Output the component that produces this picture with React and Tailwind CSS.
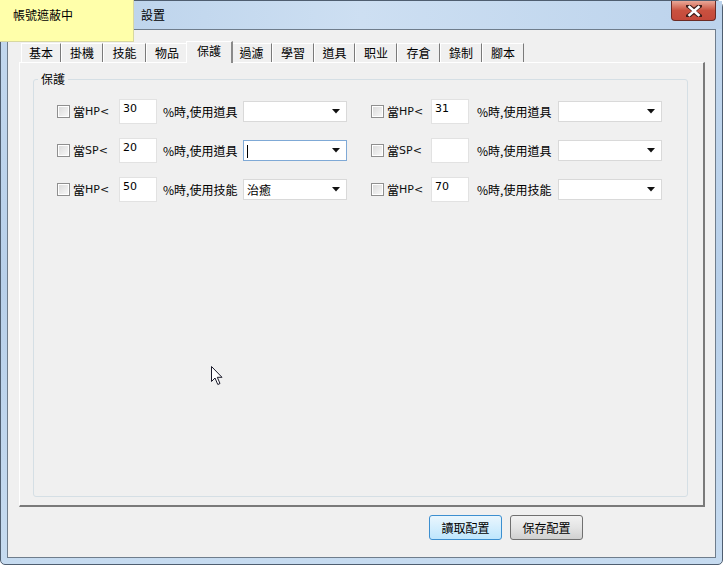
import React from "react";

const CJK = { fontFamily: '"Noto Sans CJK TC", "Noto Sans CJK SC", sans-serif' };
const LAT = { fontFamily: '"DejaVu Sans", "Liberation Sans", sans-serif' };

const TABS = [
  { label: "基本", w: 40 },
  { label: "掛機", w: 42 },
  { label: "技能", w: 43 },
  { label: "物品", w: 42 },
  { label: "保護", w: 43, active: true },
  { label: "過濾", w: 41 },
  { label: "學習", w: 42 },
  { label: "道具", w: 41 },
  { label: "职业", w: 42 },
  { label: "存倉", w: 43 },
  { label: "錄制", w: 42 },
  { label: "腳本", w: 42 },
];

const LEFT_ROWS = [
  { kind: "HP", value: "30", action: "道具", select: "" },
  { kind: "SP", value: "20", action: "道具", select: "", focused: true },
  { kind: "HP", value: "50", action: "技能", select: "治癒" },
];

const RIGHT_ROWS = [
  { kind: "HP", value: "31", action: "道具", select: "" },
  { kind: "SP", value: "", action: "道具", select: "" },
  { kind: "HP", value: "70", action: "技能", select: "" },
];

function Checkbox() {
  return (
    <span className="flex h-[13px] w-[13px] shrink-0 items-center justify-center border border-[#8f8f8f] bg-white">
      <span className="h-[9px] w-[9px] bg-gradient-to-br from-[#dcdcdc] to-[#f7f7f7]" />
    </span>
  );
}

function Select({ text, focused }) {
  return (
    <div
      className={`flex h-[21px] w-[104px] items-center justify-between border bg-white pl-[3px] pr-[6px] ${
        focused ? "border-[#7fa9d6]" : "border-[#d9d9d9]"
      }`}
    >
      <span className="text-[12px] leading-none text-black" style={CJK}>
        {focused ? <span className="inline-block h-[13px] w-px bg-black align-middle" /> : text}
      </span>
      <svg width="8" height="5" viewBox="0 0 8 5">
        <path d="M0 0 H8 L4 4.5 Z" fill="#111" />
      </svg>
    </div>
  );
}

function Row({ row, right }) {
  return (
    <div className="flex h-[25px] items-center">
      <Checkbox />
      <span className={`ml-[3px] flex items-center ${right ? "w-[44px]" : "w-[46px]"}`}>
        <span className="text-[12px] leading-none" style={CJK}>當</span>
        <span className="text-[11px] leading-none text-[#111]" style={LAT}>{row.kind}&lt;</span>
      </span>
      <div className="h-[25px] w-[38px] border border-[#e2e2e2] bg-white pl-[3px] pt-[3px] text-[11px] leading-none" style={LAT}>
        {row.value}
      </div>
      <span className={`text-[12px] leading-none ${right ? "ml-[8px] w-[81px]" : "ml-[6px] w-[80px]"}`} style={CJK}>
        %時,使用{row.action}
      </span>
      <Select text={row.select} focused={row.focused} />
    </div>
  );
}

export default function App() {
  return (
    <div className="relative h-[565px] w-[723px] overflow-hidden bg-white" style={CJK}>
      <div className="flex h-full flex-col rounded-t-[7px] rounded-b-[5px] border border-[#4f5e70] bg-gradient-to-b from-[#c3d8ee] via-[#b8d0ea] to-[#c6dbf0]">
        {/* title bar */}
        <div className="flex h-[28px] shrink-0 items-start bg-gradient-to-r from-[#b6cfe9] via-[#cddff2] to-[#bcd3ec]">
          <span className="pl-[140px] pt-[5px] text-[12px] text-black">設置</span>
          <div className="ml-auto mr-[6px] flex h-[20px] w-[45px] items-center justify-center rounded-b-[4px] border border-t-0 border-[#6b2b25] bg-gradient-to-b from-[#e9a898] via-[#c9513f] to-[#c4483a]">
            <svg width="16" height="12" viewBox="0 0 16 12">
              <path d="M2 1 L8 5 L14 1 M2 11 L8 7 L14 11 M4 2 L12 10 M12 2 L4 10" stroke="#3a1b18" strokeWidth="4" strokeLinecap="round" fill="none" />
              <path d="M3.5 2 L12.5 10 M12.5 2 L3.5 10" stroke="#fff" strokeWidth="2.6" strokeLinecap="square" fill="none" />
            </svg>
          </div>
        </div>

        {/* client area */}
        <div className="mx-[6px] mb-[6px] flex flex-1 flex-col border border-[#6f7d8c] bg-[#f0f0f0]">
          <div className="pl-[11px] pt-[11px]">
            {/* tab strip */}
            <div className="ml-[2px] flex h-[21px] items-end">
              {TABS.map((t) =>
                t.active ? (
                  <div
                    key={t.label}
                    className="relative z-10 -mx-[2px] -mb-px flex h-[22px] items-start justify-center border-l border-t border-r-2 border-white border-r-[#8a8a8a] bg-[#f0f0f0] pt-[3px] text-[12px] leading-none"
                    style={{ width: t.w + 4 }}
                  >
                    {t.label}
                  </div>
                ) : (
                  <div
                    key={t.label}
                    className="flex h-[19px] items-start justify-center border-l border-t border-r border-white border-r-[#7a7a7a] pt-[3px] text-[12px] leading-none"
                    style={{ width: t.w }}
                  >
                    {t.label}
                  </div>
                )
              )}
            </div>
            {/* tab panel */}
            <div className="h-[445px] w-[686px] border-l border-t border-r-2 border-b-2 border-white border-r-[#7a7a7a] border-b-[#7a7a7a] pl-[13px] pr-[15px] pt-[10px]">
              <fieldset className="h-[424px] rounded-[3px] border border-[#d5dfe5]">
                <legend className="ml-[4px] px-[3px] text-[12px] leading-none">保護</legend>
                <div className="grid grid-cols-[314px_314px] pl-[23px] pt-[14px]">
                  <div className="flex flex-col gap-[14px]">
                    {LEFT_ROWS.map((r, i) => (
                      <Row key={i} row={r} />
                    ))}
                  </div>
                  <div className="flex flex-col gap-[14px]">
                    {RIGHT_ROWS.map((r, i) => (
                      <Row key={i} row={r} right />
                    ))}
                  </div>
                </div>
              </fieldset>
            </div>
          </div>

          {/* buttons */}
          <div className="ml-[421px] mt-[8px] flex gap-[8px]">
            <button className="flex h-[25px] w-[73px] items-center justify-center rounded-[3px] border border-[#3c8fd0] bg-gradient-to-b from-[#eaf6fd] to-[#bee6fd] text-[12px] leading-none text-black">
              讀取配置
            </button>
            <button className="flex h-[25px] w-[73px] items-center justify-center rounded-[3px] border border-[#707070] bg-gradient-to-b from-[#f2f2f2] via-[#e4e4e4] to-[#d0d0d0] text-[12px] leading-none text-black">
              保存配置
            </button>
          </div>
        </div>
      </div>

      {/* overlay notice */}
      <div className="absolute left-0 top-0 h-[42px] w-[134px] border-b border-r border-[#d8d8a0] bg-[#ffffaa] pl-[13px] pt-[9px] text-[12px] leading-none text-black">
        帳號遮蔽中
      </div>

      {/* mouse cursor */}
      <svg className="absolute left-[211px] top-[366px]" width="13" height="20" viewBox="0 0 13 20">
        <path d="M0.5 0.5 L0.5 15.5 L4 12 L6.8 18.5 L9 17.5 L6.3 11.3 L11 11.3 Z" fill="#fff" stroke="#1a1a2a" strokeWidth="1" strokeLinejoin="round" />
      </svg>
    </div>
  );
}
